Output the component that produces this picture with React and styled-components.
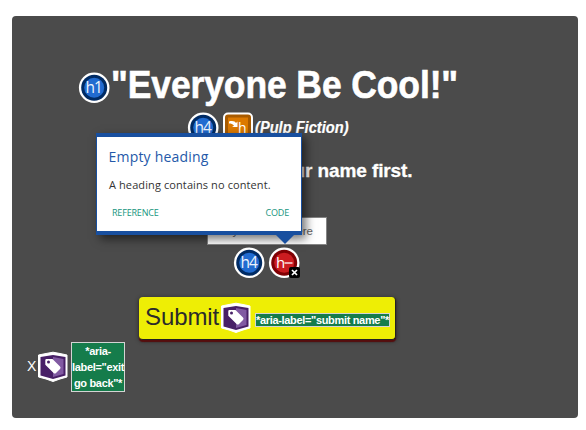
import React from "react";
import styled, { createGlobalStyle } from "styled-components";

const GlobalStyle = createGlobalStyle`
  * { box-sizing: border-box; }
  body { margin: 0; background: #fff; font-family: "Liberation Sans", Arial, sans-serif; }
`;

const Panel = styled.main`
  position: relative;
  display: flex;
  flex-direction: column;
  width: 566px;
  height: 402px;
  margin: 16px 0 0 12px;
  border-radius: 4px;
  background: #4b4b4b;
  color: #fff;
`;

const Row = styled.div`
  display: flex;
  align-items: center;
  flex: none;
  height: ${(p) => p.$height}px;
  margin-top: ${(p) => p.$top || 0}px;
  padding-left: ${(p) => p.$left}px;
  gap: ${(p) => p.$gap || 0}px;
  white-space: nowrap;
`;

const Title = styled.h1`
  margin: -7px 0 0 1px;
  font-size: 39px;
  line-height: 44px;
  letter-spacing: -0.1px;
  transform: scaleX(0.909);
  transform-origin: left;
  -webkit-text-stroke: 0.6px #fff;
`;

const Film = styled.h4`
  margin: 0 0 0 -2px;
  font-size: 16px;
  line-height: 20px;
  font-style: italic;
  transform: scaleX(0.915);
  transform-origin: left;
  -webkit-text-stroke: 0.2px #fff;
`;

const Prompt = styled.h3`
  margin: 2px 0 0;
  font-size: 19px;
  line-height: 24px;
  letter-spacing: -0.1px;
  -webkit-text-stroke: 0.3px #fff;
`;

const NameField = styled.div`
  width: 120px;
  height: 28px;
  padding-right: 13px;
  border: 1px solid #858585;
  background: #fff;
  color: #666;
  font-size: 11.5px;
  line-height: 26px;
  text-align: right;
`;

const Icon = styled.svg`
  display: block;
  flex: none;
  overflow: visible;
  text {
    font-family: "Open Sans", sans-serif;
    font-weight: 400;
    fill: #fff;
  }
`;

const SubmitButton = styled.button`
  display: flex;
  align-items: center;
  width: 257px;
  height: 43px;
  padding: 0 0 0 6px;
  border: 1px solid #222;
  border-width: 0 1px 1px 0;
  border-radius: 4px;
  background: #eeee05;
  box-shadow: 0 2px 1px #560d0d, 0 1px 4px #242424;
  color: #2b2b2b;
  font: 24px "Liberation Sans", Arial, sans-serif;
`;

const SubmitText = styled.span`
  width: 75px;
  text-align: left;
  line-height: 28px;
  margin-top: -2px;
  letter-spacing: -0.1px;
`;

const AriaNote = styled.span`
  display: block;
  flex: none;
  width: ${(p) => p.$width}px;
  height: ${(p) => p.$height}px;
  border: 1px solid #d4d4d4;
  background: #157c4b;
  color: #fff;
  font: bold 11px/${(p) => p.$line}px "Liberation Sans", Arial, sans-serif;
  text-align: center;
  letter-spacing: ${(p) => p.$spacing || 0}px;
  margin: ${(p) => p.$margin || 0};
  white-space: ${(p) => (p.$wrap ? "normal" : "nowrap")};
`;

const CloseText = styled.span`
  width: 10px;
  font-size: 14px;
  line-height: 16px;
  margin-top: -2px;
`;

const Tooltip = styled.aside`
  position: absolute;
  left: 84px;
  top: 117px;
  width: 206px;
  height: 102px;
  padding: 10px 12px 0;
  border: solid #184f9f;
  border-width: 4px 1px;
  background: #fff;
  box-shadow: 4px 4px 9px rgba(0, 0, 0, 0.55);
  color: #333;
  font-family: "Open Sans", sans-serif;
  &::after {
    content: "";
    position: absolute;
    left: 177px;
    top: 96px;
    border: solid transparent;
    border-width: 11px 11px 0;
    border-top-color: #184f9f;
  }
`;

const TipTitle = styled.h5`
  margin: 0 0 0 -0.5px;
  color: #2459a9;
  font-size: 14px;
  font-weight: 400;
  line-height: 19px;
  letter-spacing: 0.2px;
`;

const TipBody = styled.p`
  margin: 11px 0 0;
  font-size: 11px;
  line-height: 15px;
  letter-spacing: 0.1px;
`;

const TipLinks = styled.div`
  display: flex;
  justify-content: space-between;
  margin-top: 15px;
  padding: 0 0 0 3px;
  color: #17957e;
  font-size: 9px;
  line-height: 12px;
  letter-spacing: -0.18px;
`;

function HeadingBadge({ label, empty }) {
  return (
    <Icon width="32" height="32" viewBox="0 0 32 32">
      <circle cx="16.2" cy="15.8" r="15.3" fill="#fff" />
      <circle cx="16.2" cy="15.8" r="13" fill={empty ? "#800004" : "#002b64"} />
      <circle cx="16.2" cy="15.8" r="10" fill={empty ? "#cc1c20" : "#216bd0"} />
      {empty ? (
        <>
          <text x="8" y="20.6" fontSize="15">h</text>
          <path d="M16.5 16h8" stroke="#fff" strokeWidth="1.3" />
          <rect x="21" y="20" width="11" height="11" rx="2" fill="#000" />
          <path d="m24 23 5 5m0-5-5 5" stroke="#fff" strokeWidth="1.7" />
        </>
      ) : (
        <text x="15.8" y="21.4" fontSize="15.5" textAnchor="middle" letterSpacing="-0.9" opacity="0.92">{label}</text>
      )}
    </Icon>
  );
}

function SkippedBadge() {
  return (
    <Icon width="32" height="32" viewBox="0 0 32 32">
      <rect x="1" y="0.5" width="30" height="30" rx="5" fill="#fff" />
      <rect x="3" y="2.5" width="26" height="26" rx="3" fill="#a85b00" />
      <rect x="6" y="5.5" width="20" height="20" fill="#dc7900" />
      <path d="M7 9.5c4-1 6 0 7 1.5l1.5-1.5V15H10l2-1.2c-1-1.7-3-2.3-5-2.3Z" fill="#fff" />
      <text x="16" y="21" fontSize="14">h</text>
    </Icon>
  );
}

function LabelBadge() {
  return (
    <Icon width="32" height="32" viewBox="0 0 32 32">
      <path d="M1.5 4 9 2.5l7-1.3 7 1.3L30 4v22l-7 2-7 2.5L9 28l-7.5-2Z" fill="#fff" stroke="#fff" strokeLinejoin="round" />
      <path d="M3.5 6 16 4l12.5 2v18.5L16 28 3.5 24.5Z" fill="#482067" />
      <path d="m16 6 10.5 2v15L16 26Z" fill="#815aa2" />
      <path d="M9.5 8h6l7.5 7.5q1.2 1.2 0 2.4L19 22q-1.2 1.2-2.4 0l-8.3-8.3V9.2q0-1.2 1.2-1.2Z" fill="#fff" />
      <circle cx="11.5" cy="11" r="1.5" fill="#482067" />
    </Icon>
  );
}

export default function App() {
  return (
    <>
      <GlobalStyle />
      <Panel>
        <Row $height={40} $top={52} $left={66}>
          <HeadingBadge label="h1" />
          <Title>"Everyone Be Cool!"</Title>
        </Row>
        <Row $height={32} $top={4} $left={175} $gap={3}>
          <HeadingBadge label="h4" />
          <SkippedBadge />
          <Film>(Pulp Fiction)</Film>
        </Row>
        <Row $height={24} $top={14} $left={191}>
          <Prompt>Tell me your name first.</Prompt>
        </Row>
        <Row $height={28} $top={35} $left={195}>
          <NameField>Put your name here</NameField>
        </Row>
        <Row $height={32} $top={2} $left={221} $gap={3}>
          <HeadingBadge label="h4" />
          <HeadingBadge empty />
        </Row>
        <Row $height={43} $top={18} $left={127}>
          <SubmitButton>
            <SubmitText>Submit</SubmitText>
            <LabelBadge />
            <AriaNote $width={135} $height={14} $line={12} $spacing={-0.33} $margin="4px 0 0 3px">
              *aria-label="submit name"*
            </AriaNote>
          </SubmitButton>
        </Row>
        <Row $height={50} $top={2} $left={15}>
          <CloseText>X</CloseText>
          <LabelBadge />
          <AriaNote $width={54} $height={50} $line={16} $spacing={-0.33} $margin="0 0 0 2px" $wrap>
            *aria-label="exit go back"*
          </AriaNote>
        </Row>
        <Tooltip>
          <TipTitle>Empty heading</TipTitle>
          <TipBody>A heading contains no content.</TipBody>
          <TipLinks>
            <span>REFERENCE</span>
            <span>CODE</span>
          </TipLinks>
        </Tooltip>
      </Panel>
    </>
  );
}
